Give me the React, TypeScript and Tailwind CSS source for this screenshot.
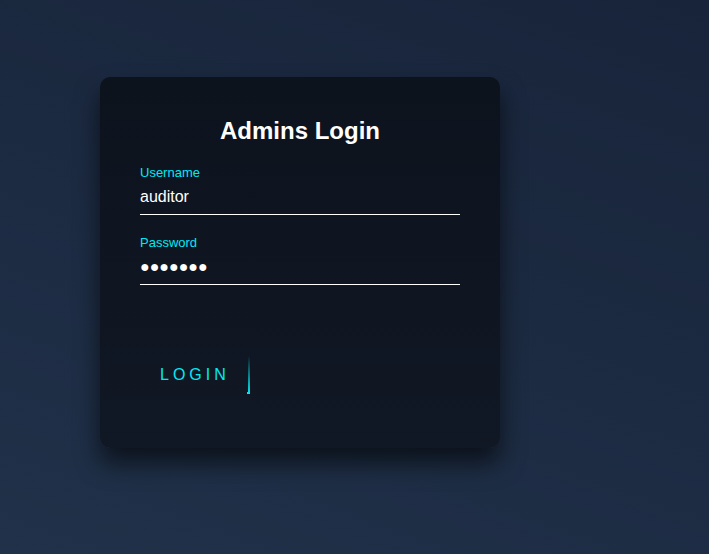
import React from "react"

function Field({ label, value, last }: { label: string; value: string; last?: boolean }) {
  return (
    <div className={last ? "" : "mb-5"}>
      <label className="block pt-px text-[13px] leading-[14px] text-[#03e9f4]">{label}</label>
      <input
        type="text"
        value={value}
        readOnly
        className="mt-2 block w-full border-b border-white bg-transparent pb-2 text-base leading-[18px] text-white outline-none"
      />
    </div>
  )
}

export default function App() {
  return (
    <div
      className="min-h-[554px] w-full bg-[linear-gradient(200deg,#18243a,#203149)] pl-[100px] pt-[77px]"
      style={{ fontFamily: '"Liberation Sans", Arial, sans-serif' }}
    >
      <div className="h-[371px] w-[400px] rounded-[10px] bg-[linear-gradient(180deg,#0c131d,#111825)] p-10 shadow-[0_15px_25px_rgba(0,0,0,0.6)]">
        <h2 className="mb-5 text-center text-2xl font-bold leading-[28px] text-white">Admins Login</h2>
        <Field label="Username" value="auditor" />
        <Field label="Password" value="●●●●●●●" last />
        <button className="relative mt-[71px] overflow-hidden px-5 py-[10px] text-base uppercase leading-[18px] tracking-[4px] text-[#03e9f4]">
          Login
          <span className="absolute right-0 top-0 h-full w-[2px] bg-[linear-gradient(180deg,transparent,#03e9f4)]" />
          <span className="absolute bottom-0 right-[2px] h-[2px] w-[1px] bg-[#03e9f4]" />
        </button>
      </div>
    </div>
  )
}
